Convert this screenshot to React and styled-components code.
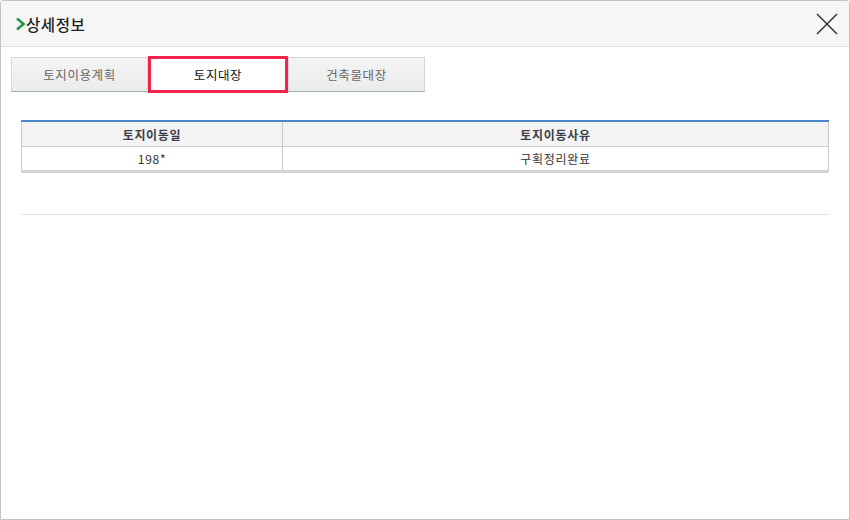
import React, { useState } from 'react';
import styled, { createGlobalStyle } from 'styled-components';

const GlobalStyle = createGlobalStyle`
  html, body { margin: 0; padding: 0; background: #fff; }
  body { font-family: 'Noto Sans CJK KR', 'Noto Sans', sans-serif; }
`;

const Window = styled.div`
  box-sizing: border-box;
  width: 850px;
  height: 520px;
  border: 1px solid #c4c4c4;
  border-radius: 3px 3px 0 0;
  background: #fff;
  display: flex;
  flex-direction: column;
`;

const Header = styled.div`
  height: 45px;
  flex: none;
  display: flex;
  align-items: center;
  justify-content: space-between;
  padding: 0 10px 0 14px;
  background: #f6f6f6;
  border-bottom: 1px solid #dedede;
`;

const Title = styled.h1`
  margin: 0;
  display: flex;
  align-items: center;
  font-size: 15.5px;
  font-weight: 500;
  color: #222;
  letter-spacing: 0.6px;
`;

const CloseButton = styled.button`
  border: 0;
  background: none;
  padding: 0;
  width: 24px;
  height: 24px;
  display: flex;
  align-items: center;
  justify-content: center;
  cursor: pointer;
`;

const Body = styled.div`
  padding: 10px 20px 0 10px;
`;

const Tabs = styled.div`
  display: flex;
  align-items: flex-start;
  height: 37px;
`;

const Tab = styled.button`
  box-sizing: border-box;
  width: ${p => (p.$active ? '140px' : '137px')};
  height: ${p => (p.$active ? '37px' : '35px')};
  margin-top: ${p => (p.$active ? '-1px' : '0')};
  padding: 0;
  font-family: inherit;
  font-size: 12.5px;
  letter-spacing: 0.6px;
  color: ${p => (p.$active ? '#111' : '#666')};
  background: ${p => (p.$active ? '#fff' : 'linear-gradient(#f4f4f4, #ebebeb)')};
  border: ${p => (p.$active ? '3px solid #f2224a' : '1px solid #d6d6d6')};
  border-bottom-color: ${p => (p.$active ? '#f2224a' : '#9bb09b')};
  cursor: pointer;
`;

const Content = styled.div`
  padding: 26px 0 0 10px;
`;

const Table = styled.table`
  width: 808px;
  table-layout: fixed;
  border-collapse: collapse;
  border-top: 2px solid #4a87c6;
  border-bottom: 3px solid #d2d2d2;
  font-size: 12px;
  letter-spacing: 0.7px;
`;

const Th = styled.th`
  height: 24px;
  padding: 0;
  background: #f3f3f3;
  color: #3b3d4c;
  font-weight: 700;
  border: 1px solid #cbcbcb;
  border-top: 0;
`;

const Td = styled.td`
  height: 23px;
  padding: 0;
  text-align: center;
  color: #333;
  border: 1px solid #cbcbcb;
  border-top: 0;
  border-bottom: 0;
`;

const Divider = styled.hr`
  margin: 41px 0 0;
  width: 808px;
  border: 0;
  border-top: 1px solid #e2e2e2;
`;

const tabs = ['토지이용계획', '토지대장', '건축물대장'];

const rows = [{ date: '198*', reason: '구획정리완료' }];

export default function App() {
  const [active, setActive] = useState(1);

  return (
    <>
      <GlobalStyle />
      <Window>
        <Header>
          <Title>
            <svg width="11" height="14" viewBox="0 0 11 14">
              <path d="M2 1.5 L8.5 7 L2 12.5" fill="none" stroke="#22984a" strokeWidth="2.6" />
            </svg>
            상세정보
          </Title>
          <CloseButton aria-label="닫기">
            <svg width="22" height="22" viewBox="0 0 22 22">
              <path d="M1 1 L21 21 M21 1 L1 21" stroke="#333" strokeWidth="1.5" />
            </svg>
          </CloseButton>
        </Header>
        <Body>
          <Tabs>
            {tabs.map((t, i) => (
              <Tab key={t} $active={i === active} onClick={() => setActive(i)}>
                {t}
              </Tab>
            ))}
          </Tabs>
          <Content>
            <Table>
              <colgroup>
                <col style={{ width: 261 }} />
                <col />
              </colgroup>
              <thead>
                <tr>
                  <Th>토지이동일</Th>
                  <Th>토지이동사유</Th>
                </tr>
              </thead>
              <tbody>
                {rows.map(r => (
                  <tr key={r.date}>
                    <Td>{r.date}</Td>
                    <Td>{r.reason}</Td>
                  </tr>
                ))}
              </tbody>
            </Table>
            <Divider />
          </Content>
        </Body>
      </Window>
    </>
  );
}
